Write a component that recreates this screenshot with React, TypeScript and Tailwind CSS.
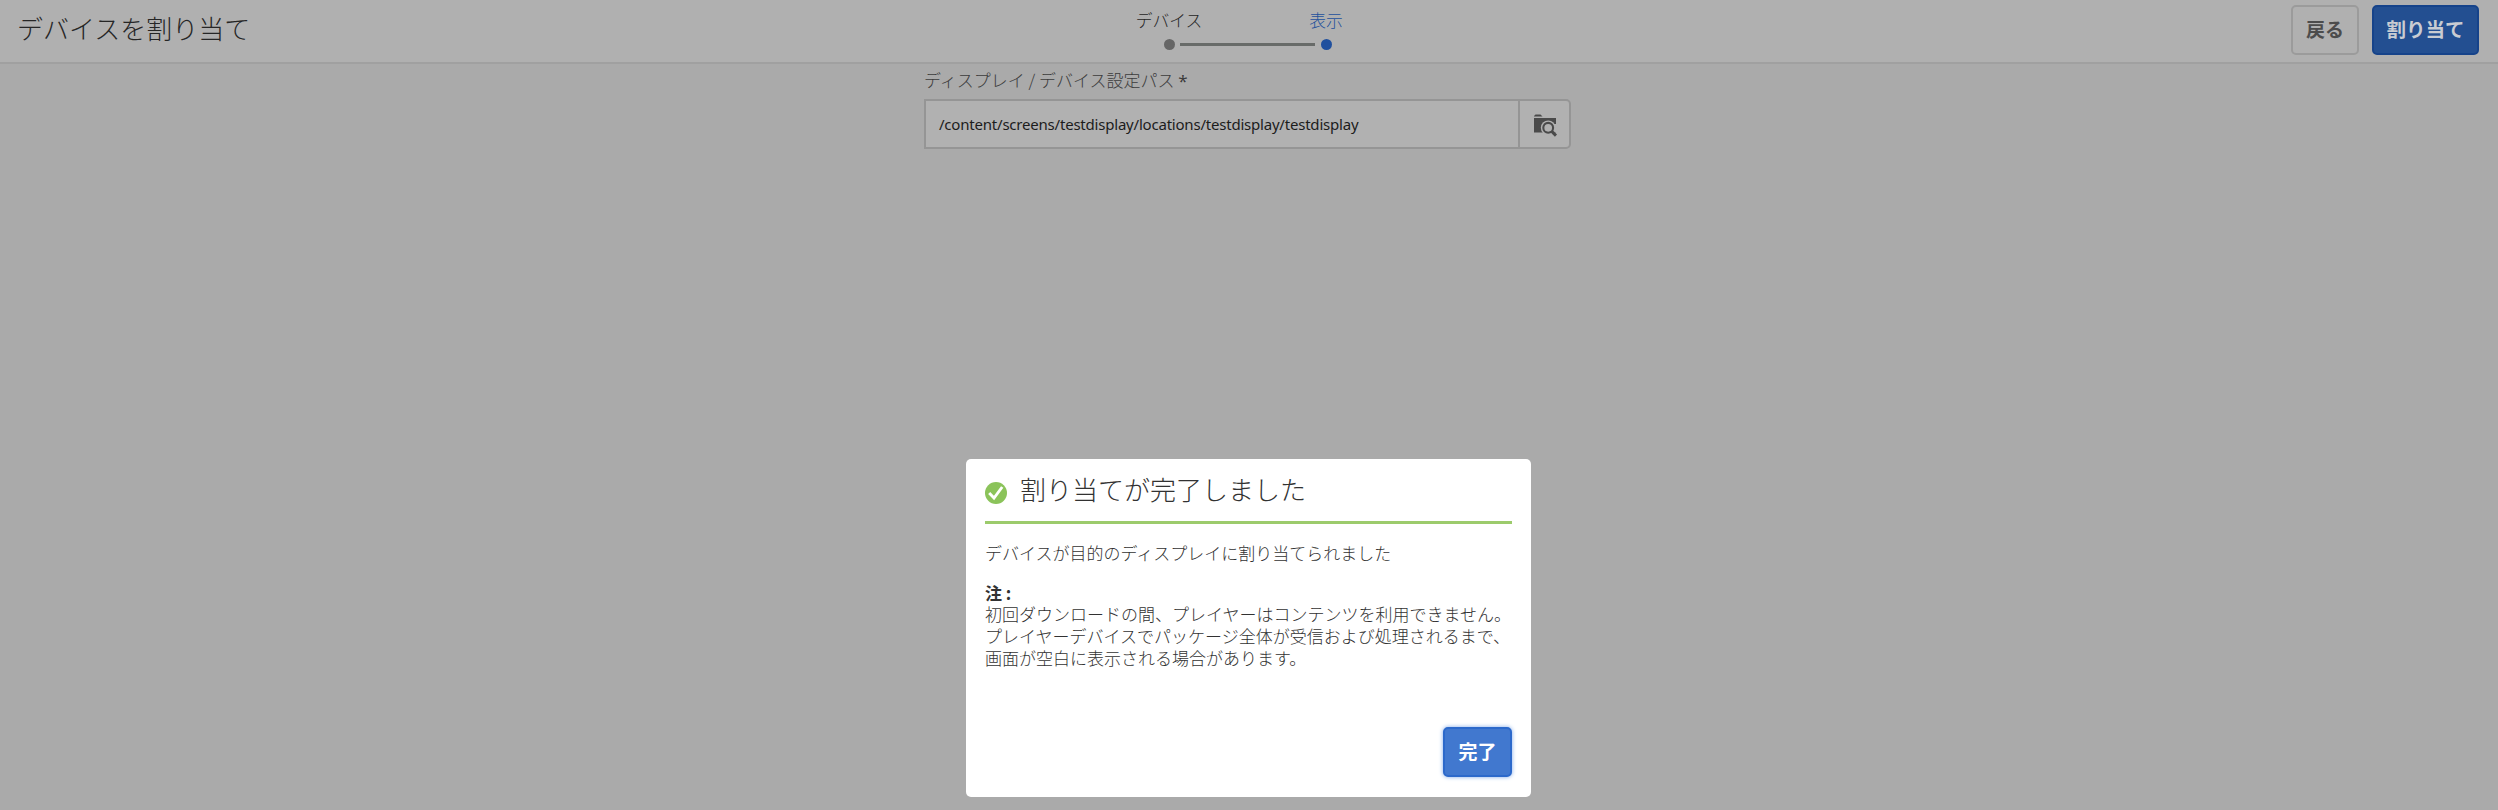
function Header() {
  return (
    <header className="relative flex h-[64px] items-start justify-between border-b-2 border-[#a0a0a0] bg-[#b0b0b0] pl-[17px] pr-[19px]">
      <h1 className="mt-[9px] text-[26px] font-light leading-[38px] text-[#262626]">デバイスを割り当て</h1>
      <nav className="absolute left-[1136px] top-0 flex">
        <div className="flex w-[66px] flex-col items-center whitespace-nowrap text-[16.8px] font-light leading-[20px] text-[#262626]">
          <span className="mt-[10px]">デバイス</span>
          <i className="mt-[9px] size-[11px] rounded-full bg-[#666666]" />
        </div>
        <i className="-ml-[22px] mt-[43px] h-[3px] w-[135px] bg-[#686b69]" />
        <div className="-ml-[5px] flex w-[32px] flex-col items-center whitespace-nowrap text-[16.8px] font-light leading-[20px] text-[#23509c]">
          <span className="mt-[10px]">表示</span>
          <i className="mt-[9px] size-[11px] rounded-full bg-[#20509e]" />
        </div>
      </nav>
      <div className="mt-[5px] flex gap-[13px]">
        <button className="h-[50px] w-[68px] rounded-[5px] border-2 border-[#9b9b9b] pb-[2px] text-[19px] font-bold text-[#4c4c4c]">戻る</button>
        <button className="h-[50px] w-[107px] rounded-[5px] border-2 border-[#16438a] bg-[#234f91] pb-[2px] text-[19.5px] font-bold text-[#c9ccd2]">割り当て</button>
      </div>
    </header>
  );
}

function PathField() {
  return (
    <section className="ml-[924px] w-[647px]">
      <label className="block h-[35px] whitespace-pre pt-[4px] text-[17px] font-light leading-[24px] text-[#3c3c3c]">ディスプレイ / デバイス設定パス <span className="font-['Noto_Sans'] font-normal">*</span></label>
      <div className="flex h-[50px] rounded-[5px] rounded-l-none border-2 border-[#959595] bg-[#b1b1b1]">
        <div className="flex w-[592px] items-center pl-[13px] pt-[1px] font-['Noto_Sans'] text-[15px] tracking-[-0.21px] text-[#1c1c1c]">
          /content/screens/testdisplay/locations/testdisplay/testdisplay
        </div>
        <button className="flex flex-1 items-center justify-center border-l-2 border-[#959595]">
          <svg width="23" height="23" viewBox="0 0 23 23" className="ml-[2px] mt-[2px]">
            <path d="M0 2 L1.5 .5 H6.5 L8.5 2.5 H0Z M0 4 H22 V18.5 H0Z" fill="#4a4a4a" />
            <path d="M19 18.5 H23 V10 H19Z" fill="#b1b1b1" />
            <circle cx="14.2" cy="13.8" r="7.4" fill="#b1b1b1" />
            <circle cx="14.2" cy="13.8" r="4.9" fill="#b1b1b1" stroke="#4a4a4a" strokeWidth="2.1" />
            <path d="M17.8 17.4 L22 21.6" stroke="#4a4a4a" strokeWidth="3" />
          </svg>
        </button>
      </div>
    </section>
  );
}

function SuccessDialog() {
  return (
    <div role="dialog" className="absolute left-[966px] top-[459px] flex h-[338px] w-[565px] flex-col rounded-[5px] bg-white px-[19px] text-[17px] font-light leading-[22px] text-[#323232]">
      <div className="flex h-[65px] items-start border-b-[3px] border-[#9ccb6c]">
        <svg width="22" height="22" viewBox="0 0 22 22" className="mt-[23px]">
          <circle cx="11" cy="11" r="11" fill="#8bc35a" />
          <path d="M4.2 11 L9 16 L17.2 5" fill="none" stroke="#fff" strokeWidth="2.9" />
        </svg>
        <h2 className="ml-[13px] mt-[11px] whitespace-nowrap text-[26px] leading-[38px]">割り当てが完了しました</h2>
      </div>
      <p className="mt-[18px]">デバイスが目的のディスプレイに割り当てられました</p>
      <strong className="mt-[18px] font-bold">注 :</strong>
      <p className="-mt-px whitespace-nowrap">
        初回ダウンロードの間、プレイヤーはコンテンツを利用できません。<br />
        プレイヤーデバイスでパッケージ全体が受信および処理されるまで、<br />
        画面が空白に表示される場合があります。
      </p>
      <button className="mb-[20px] mt-auto h-[50px] w-[69px] self-end rounded-[5px] border-2 border-[#2c69cb] bg-[#4178cf] pb-[3px] text-[19px] font-bold text-white shadow-[0_0_4px_#7fa8e8]">完了</button>
    </div>
  );
}

export default function App() {
  return (
    <main lang="ja" className="relative h-[810px] w-[2498px] overflow-hidden bg-[#aaaaaa] font-['Noto_Sans_CJK_JP',sans-serif]">
      <Header />
      <PathField />
      <SuccessDialog />
    </main>
  );
}
